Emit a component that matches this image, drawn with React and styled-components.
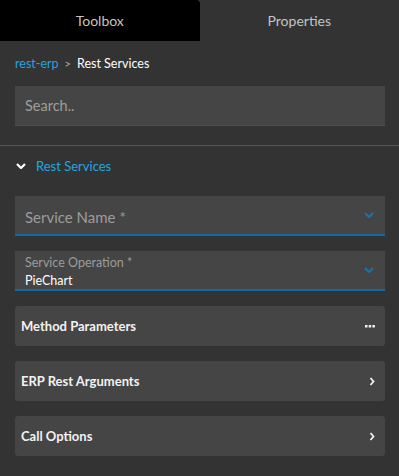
import React from "react";
import styled, { createGlobalStyle } from "styled-components";

const GlobalStyle = createGlobalStyle`
  html, body {
    margin: 0;
    padding: 0;
    background: #333333;
  }
  body {
    font-family: Lato, "Open Sans", sans-serif;
  }
`;

const Panel = styled.div`
  width: 399px;
  height: 476px;
  background: #333333;
  overflow: hidden;
`;

const Tabs = styled.div`
  display: flex;
  height: 41px;
`;

const Tab = styled.div`
  flex: 1;
  display: flex;
  align-items: center;
  justify-content: center;
  font-size: 14px;
  color: ${props => (props.active ? "#c9c2bc" : "#c4c4c4")};
  background: ${props => (props.active ? "#000000" : "transparent")};
  border-top-right-radius: ${props => (props.active ? "4px" : "0")};
`;

const Content = styled.div`
  padding: 0 14px 0 15px;
`;

const Breadcrumb = styled.div`
  display: flex;
  align-items: center;
  gap: 6px;
  height: 45px;
  padding-bottom: 1px;
  box-sizing: border-box;
  font-size: 12.5px;
  color: #ffffff;
  a {
    color: #22a4e0;
    text-decoration: none;
  }
  span.sep {
    color: #aaaaaa;
    font-size: 11px;
  }
`;

const Search = styled.div`
  height: 39px;
  background: #454545;
  border-bottom: 1px solid #1b5d80;
  display: flex;
  align-items: center;
  padding-left: 10px;
  font-size: 14.5px;
  color: #9e9e9e;
`;

const Divider = styled.div`
  height: 1px;
  background: #545454;
  margin-top: 19px;
`;

const Section = styled.div`
  display: flex;
  align-items: center;
  gap: 10px;
  height: 40px;
  padding-left: 16px;
  font-size: 13px;
  color: #1fa6e1;
  svg {
    display: block;
  }
`;

const Body = styled.div`
  display: flex;
  flex-direction: column;
  gap: 15px;
  padding: 10px 14px 0 15px;
`;

const Field = styled.div`
  position: relative;
  box-sizing: content-box;
  height: 34px;
  padding: 4px 0 0 10px;
  background: #454545;
  border-bottom: 2px solid #106ba3;
  display: flex;
  flex-direction: column;
  justify-content: center;
`;

const Label = styled.div`
  color: #9c9c9c;
  font-size: ${props => (props.small ? "12.5px" : "15px")};
  line-height: ${props => (props.small ? "15px" : "18px")};
  margin-bottom: ${props => (props.small ? "3px" : "0")};
`;

const Value = styled.div`
  color: #ffffff;
  font-size: 12.5px;
  line-height: 16px;
`;

const Caret = styled.div`
  position: absolute;
  right: 11px;
  top: 0;
  bottom: 0;
  display: flex;
  align-items: center;
`;

const Group = styled.div`
  height: 40px;
  background: #454545;
  border-radius: 3px;
  display: flex;
  align-items: center;
  justify-content: space-between;
  padding: 0 10px 0 6px;
  font-size: 13px;
  font-weight: 700;
  color: #f2f2f2;
`;

const ChevronDown = ({ color = "#1a73ad", size = 10, stroke = 2 }) => (
  <svg width={size} height={size * 0.6} viewBox="0 0 10 6">
    <path d="M1 1 L5 5 L9 1" fill="none" stroke={color} strokeWidth={stroke} />
  </svg>
);

const ChevronRight = () => (
  <svg width="6" height="9" viewBox="0 0 6 9">
    <path d="M1.5 1 L4.5 4.5 L1.5 8" fill="none" stroke="#f2f2f2" strokeWidth="1.8" />
  </svg>
);

const Dots = () => (
  <svg width="10" height="3" viewBox="0 0 10 3">
    <rect x="0" y="0" width="2.5" height="2.5" fill="#f2f2f2" />
    <rect x="3.7" y="0" width="2.5" height="2.5" fill="#f2f2f2" />
    <rect x="7.4" y="0" width="2.5" height="2.5" fill="#f2f2f2" />
  </svg>
);

export default function App() {
  return (
    <Panel>
      <GlobalStyle />
      <Tabs>
        <Tab active>Toolbox</Tab>
        <Tab>Properties</Tab>
      </Tabs>
      <Content>
        <Breadcrumb>
          <a href="#">rest-erp</a>
          <span className="sep">&gt;</span>
          <span>Rest Services</span>
        </Breadcrumb>
        <Search>Search..</Search>
      </Content>
      <Divider />
      <Section>
        <ChevronDown color="#ffffff" size={10} stroke={2.2} />
        Rest Services
      </Section>
      <Body>
        <Field>
          <Label>Service Name *</Label>
          <Caret>
            <ChevronDown />
          </Caret>
        </Field>
        <Field>
          <Label small>Service Operation *</Label>
          <Value>PieChart</Value>
          <Caret>
            <ChevronDown />
          </Caret>
        </Field>
        <Group>
          Method Parameters
          <Dots />
        </Group>
        <Group>
          ERP Rest Arguments
          <ChevronRight />
        </Group>
        <Group>
          Call Options
          <ChevronRight />
        </Group>
      </Body>
    </Panel>
  );
}
